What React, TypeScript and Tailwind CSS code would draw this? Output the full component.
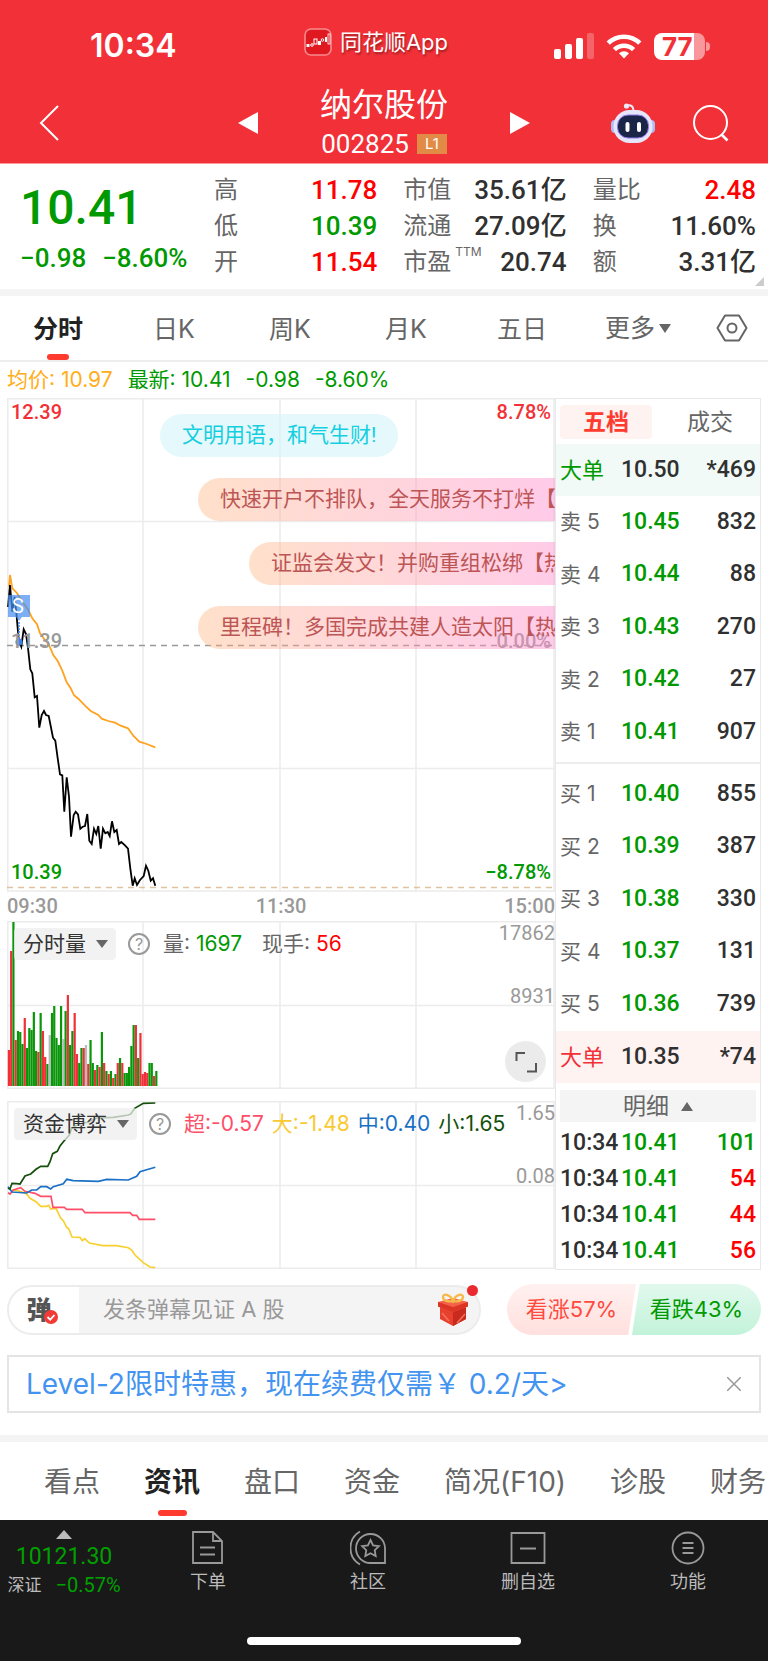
import { useState } from "react";

const PRICE_LINE =
  "1,209 3,187 5.3,213.7 7.7,199 9.7,218.7 11.7,242 14.3,248.7 16.7,231.3 19,236 21,250 23.3,271.3 25.3,275.3 27.7,299.3 30,298 32.3,329.7 34.7,317 37,313 39,317 41.7,318 43.7,328 46,339.7 48.3,342.7 50.7,360.3 53,376.3 55.3,377.3 57.3,413.7 59.7,379.3 62,398.7 64,438.7 66.7,417 68.7,413.7 71,416.3 73.3,430.7 75.7,428.7 78,428 80.3,416 82.3,442.7 84.7,446 87,430.7 89.3,436 91.3,428 93.7,450.7 96,430.7 98.3,435.3 100.7,434 102.7,438 105,423.3 107.3,434 109.7,432 112,446 114.3,444 118,447.3 121,450.7 123.3,470.3 125.7,487.7 127.7,480.3 130,487 133,482 136.7,478 139,467.7 141.3,472.7 143.7,482.7 146,480.3 148.3,487.7";
const AVG_LINE =
  "2,188.7 3,177 5.3,190.3 9.7,194.7 14.3,202 21.3,212 25.3,220.3 30,226.3 33,235.3 38,242 42,247 46.3,257 50.7,263 55.3,272.7 59.7,284.3 63.7,290.3 67,297.3 71.3,300.7 78,307.7 83.7,313 91.3,317 94.7,320.7 101.3,323 108,324.7 113.7,327.7 121,330.3 126.3,337.7 132.3,343.7 139.7,346 148.3,349.3";

const fundLines = [
  {
    color: "#f9d02f",
    points:
      "5,89 11.3,89.7 19.7,93 23,97.3 29,100.7 33.7,105.3 39.7,105.3 41.7,104.3 43.7,108 49,107.3 53.7,117 56.3,119.7 59.7,126.3 61.7,127.7 65,136 73,136.3 75.3,139.7 77.7,137.7 82.3,142 95.7,144.7 109.7,144.7 121.3,146.7 124.7,149 128,154 136.3,161.7 143,166 148.3,166.7",
  },
  {
    color: "#ff4f68",
    points:
      "1,91.7 3,93 6.3,89 13.7,86.7 18,90.3 28,92.3 33.7,95.3 44,95.3 46,106.3 57.3,106.3 59.7,108.3 75.3,108.3 78,111.7 123,111.7 125.7,114.3 129.7,114.3 132.3,118.3 148.3,118.3",
  },
  {
    color: "#1a70c4",
    points:
      "1,85.7 5,91 19.7,92 24.7,89 29.7,89 33.7,85.7 39.7,85.7 43.7,88 46.3,85.7 56.3,82.7 59.7,78.3 66.3,79.7 91.3,80.3 99.7,78.3 121.3,79 129.7,75.3 133,70.7 141.3,68.3 148.3,66.3",
  },
  {
    color: "#14500a",
    points:
      "1,87.3 3,88 5,82.3 9.7,82.7 13,83 18,75 23.7,73 29,68.3 33.7,65.3 40.7,65.3 43,60.7 45.7,52.7 50.3,50.3 53,45 57,40 62.3,34 64.7,27.3 71.3,23.3 80.3,21.3 89.7,17 106.3,16.3 121.3,14 123.7,13 127.7,7.3 136.3,2.3 148.3,2",
  },
];

// r = up, g = down, n = flat; number = bar height
const volumes =
  "r36 r135 g164 r46 g55 g54 g42 r68 g38 g58 g56 g74 g35 r34 g73 r55 r29 g22 n51 g73 g80 g48 g41 g80 n47 g75 r91 g41 g55 r73 r32 g23 g38 r38 n41 r22 g46 g23 r16 g21 r19 g54 r23 g15 r12 g15 r8 g12 r23 g28 r23 g13 g13 g19 g40 g61 r61 g28 r53 r12 r14 r13 g23 g23 r10 g15".split(" ");
const barColors: Record<string, string> = { r: "#ef3038", g: "#0a960a", n: "#bbbbbb" };

const stats = [
  [
    { label: "高", value: "11.78", color: "text-[#ff0000]" },
    { label: "低", value: "10.39", color: "text-[#009900]" },
    { label: "开", value: "11.54", color: "text-[#ff0000]" },
  ],
  [
    { label: "市值", value: "35.61亿", color: "text-[#303030]" },
    { label: "流通", value: "27.09亿", color: "text-[#303030]" },
    { label: "市盈", sup: "TTM", value: "20.74", color: "text-[#303030]" },
  ],
  [
    { label: "量比", value: "2.48", color: "text-[#ff0000]" },
    { label: "换", value: "11.60%", color: "text-[#303030]" },
    { label: "额", value: "3.31亿", color: "text-[#303030]" },
  ],
];

const sells = [
  ["卖 5", "10.45", "832"],
  ["卖 4", "10.44", "88"],
  ["卖 3", "10.43", "270"],
  ["卖 2", "10.42", "27"],
  ["卖 1", "10.41", "907"],
];
const buys = [
  ["买 1", "10.40", "855"],
  ["买 2", "10.39", "387"],
  ["买 3", "10.38", "330"],
  ["买 4", "10.37", "131"],
  ["买 5", "10.36", "739"],
];
const ticks = [
  ["10:34", "101", "text-[#009900]"],
  ["10:34", "54", "text-[#ff0000]"],
  ["10:34", "44", "text-[#ff0000]"],
  ["10:34", "56", "text-[#ff0000]"],
];

const num = "font-['Roboto','Noto_Sans_CJK_SC',sans-serif]";

function StatusBar() {
  return (
    <div className="grid grid-cols-3 items-center px-[58px] pt-6">
      <span className="pl-8 text-[32px] leading-[44px] font-semibold">10:34</span>
      <div className="flex items-center justify-center gap-2 pr-4 pb-2">
        <svg viewBox="0 0 28 28" className="size-7 shrink-0" aria-hidden="true">
          <rect x="1" y="1" width="26" height="26" rx="6" fill="#e01820" stroke="#f98a8e" strokeWidth="1.6" />
          <g fill="#fff">
            <rect x="2.5" y="16" width="3" height="3" />
            <rect x="10" y="11" width="3" height="5" fill="none" stroke="#fff" />
            <rect x="14" y="13" width="3" height="4" />
            <rect x="21" y="9" width="2" height="5" />
          </g>
          <circle cx="8" cy="17" r="1.3" fill="none" stroke="#fff" />
          <circle cx="18.5" cy="12" r="1.3" fill="none" stroke="#fff" />
          <rect x="24" y="6" width="2" height="10" fill="none" stroke="#fff" strokeWidth=".8" />
        </svg>
        <span className="text-[22px] leading-8 whitespace-nowrap [text-shadow:1px_2px_2px_rgba(0,0,0,0.35)]">同花顺App</span>
      </div>
      <div className="flex items-center justify-end gap-3">
        <svg width="40" height="26" viewBox="0 0 40 26" fill="#fff" aria-hidden="true">
          <rect x="0" y="16" width="7" height="10" rx="2" />
          <rect x="11" y="11" width="7" height="15" rx="2" />
          <rect x="22" y="5" width="7" height="21" rx="2" />
          <rect x="33" y="0" width="7" height="26" rx="2" opacity=".25" />
        </svg>
        <svg width="36" height="26" viewBox="0 0 36 26" fill="none" stroke="#fff" strokeWidth="4.6" aria-hidden="true">
          <path d="M2.2 10.2a22.5 22.5 0 0 1 31.6 0" />
          <path d="M8.4 16.6a13.8 13.8 0 0 1 19.2 0" />
          <path d="M18 25.5l-5-5.2a7.4 7.4 0 0 1 10 0z" fill="#fff" stroke="none" />
        </svg>
        <div className="flex items-center gap-px">
          <div className="h-[27px] w-[51px] rounded-lg bg-linear-to-r from-white from-78% to-white/50 to-78% pl-2 text-[26px] leading-[28px] font-bold text-[#f23037]">
            77
          </div>
          <div className="h-[9px] w-[4px] rounded-r-full bg-white/50" />
        </div>
      </div>
    </div>
  );
}

function Robot() {
  return (
    <svg width="46" height="42" viewBox="0 0 46 42" aria-hidden="true">
      <path d="M17 3.5c4-1 6.500 1 6.500 5" fill="none" stroke="#eceaf8" strokeWidth="2" />
      <circle cx="16.500" cy="4" r="2.600" fill="#eceaf8" />
      <rect x="1" y="18" width="8" height="13" rx="4" fill="#aebbf5" />
      <rect x="37" y="18" width="8" height="13" rx="4" fill="#aebbf5" />
      <rect x="3.500" y="8" width="39" height="33" rx="16" fill="#e6e6fa" />
      <rect x="7.500" y="13" width="31" height="23" rx="10.500" fill="#1b2547" stroke="#8f7bf0" strokeWidth="1" />
      <rect x="15.500" y="20" width="4" height="10" rx="2" fill="#fff" />
      <rect x="27" y="20" width="4" height="10" rx="2" fill="#fff" />
    </svg>
  );
}

function TitleBar() {
  return (
    <div className="grid grid-cols-[1fr_auto_1fr] items-center px-[38px]">
      <button type="button" aria-label="返回" className="justify-self-start">
        <svg width="22" height="36" viewBox="0 0 22 36" fill="none" stroke="#fff" strokeWidth="2">
          <path d="M20 1L3 18l17 17" />
        </svg>
      </button>
      <div className="flex items-center gap-[62px]">
        <button type="button" aria-label="上一只">
          <svg width="20" height="22" viewBox="0 0 20 22" fill="#fff"><path d="M20 0v22L0 11z" /></svg>
        </button>
        <div className="flex flex-col items-center gap-[3px]">
          <h1 className="text-[32px] leading-10">纳尔股份</h1>
          <div className="flex items-center gap-2">
            <span className={`${num} text-[26px] leading-8`}>002825</span>
            <span className="bg-[#e18b46] px-2 text-[15px] leading-5">L1</span>
          </div>
        </div>
        <button type="button" aria-label="下一只">
          <svg width="20" height="22" viewBox="0 0 20 22" fill="#fff"><path d="M0 0v22l20-11z" /></svg>
        </button>
      </div>
      <div className="flex items-center justify-end gap-9">
        <button type="button" aria-label="智能助手"><Robot /></button>
        <button type="button" aria-label="搜索">
          <svg width="38" height="38" viewBox="0 0 38 38" fill="none" stroke="#fff" strokeWidth="2">
            <circle cx="18.500" cy="18.500" r="16.500" />
            <path d="M29.500 30.500l6 6" strokeWidth="2.600" />
          </svg>
        </button>
      </div>
    </div>
  );
}

function Quote() {
  return (
    <section className="relative flex h-[126px] border-t border-[#f99] pr-3">
      <div className={`${num} w-[214px] shrink-0 pl-5 font-medium text-[#009900]`}>
        <div className="pt-3 text-[48px] leading-[64px]">10.41</div>
        <div className="flex gap-4 text-[26px] leading-9">
          <span>−0.98</span>
          <span>−8.60%</span>
        </div>
      </div>
      <div className="grid flex-1 grid-cols-3 gap-[26px] pt-2">
        {stats.map((col, i) => (
          <dl key={i}>
            {col.map(s => (
              <div key={s.label} className="flex h-9 items-center justify-between">
                <dt className="flex text-2xl leading-9 whitespace-nowrap text-[#666]">
                  {s.label}
                  {s.sup && <sup className="top-0 pl-1 text-xs leading-4">{s.sup}</sup>}
                </dt>
                <dd className={`${num} text-[26px] leading-9 font-medium whitespace-nowrap ${s.color}`}>{s.value}</dd>
              </div>
            ))}
          </dl>
        ))}
      </div>
      <svg className="absolute right-1 bottom-[3px]" width="9" height="9" viewBox="0 0 9 9" fill="#ccc" aria-hidden="true">
        <path d="M9 0v9H0z" />
      </svg>
    </section>
  );
}

function PeriodTabs() {
  const [active, setActive] = useState("分时");
  return (
    <nav className="flex h-[66px] items-stretch border-b-2 border-[#eee]">
      {["分时", "日K", "周K", "月K", "五日"].map(t => (
        <button
          key={t}
          type="button"
          onClick={() => setActive(t)}
          className={`flex flex-1 flex-col items-center justify-end gap-1 text-[25px] leading-9 ${
            active === t ? "font-bold text-[#222]" : "text-[#666]"
          }`}
        >
          <span className="pb-[3px]">{t}</span>
          <span className={`h-[6px] w-[22px] rounded-[3px] ${active === t ? "bg-[#ff3b30]" : ""}`} />
        </button>
      ))}
      <button type="button" className="flex flex-1 items-center justify-center gap-1 text-[25px] leading-9 text-[#666]">
        更多
        <svg width="12" height="9" viewBox="0 0 12 9" fill="#666"><path d="M0 0h12L6 9z" /></svg>
      </button>
      <button type="button" aria-label="设置" className="flex w-[72px] items-center justify-center">
        <svg width="32" height="28" viewBox="0 0 32 28" fill="none" stroke="#666" strokeWidth="2">
          <path d="M9 1.500h14L30.500 14 23 26.500H9L1.500 14z" strokeLinejoin="round" />
          <circle cx="16" cy="14" r="4.500" />
        </svg>
      </button>
    </nav>
  );
}

function PriceChart() {
  const pill = "w-max rounded-full px-[22px] leading-[43px] text-[21px] whitespace-nowrap";
  const hot = "bg-linear-to-r from-[#ffb27a]/40 to-[#ff8ccb]/45 to-90% text-[#bd5555]";
  return (
    <div className={`relative h-[494px] ${num} text-xl leading-6 font-medium`}>
      <svg viewBox="0 0 548 494" preserveAspectRatio="none" className="absolute inset-0 size-full" fill="none">
        <g stroke="#ececec" strokeWidth="1.500">
          <path d="M0 .8h548M0 123.500h548M0 370.500h548M0 493h548M.8 0v494M136 0v494M273 0v494M409 0v494M547 0v494" />
        </g>
        <path d="M0 247.500h548" stroke="#999" strokeWidth="1.500" strokeDasharray="6 5" />
        <path d="M0 489.500h548" stroke="#dfc3a0" strokeWidth="1.300" strokeDasharray="6 5" />
        <polyline points={AVG_LINE} stroke="#ffa21f" strokeWidth="1.800" />
        <polyline points={PRICE_LINE} stroke="#000" strokeWidth="1.800" />
        <path d="M12 224v18" stroke="#3b8bef" strokeWidth="1.500" strokeDasharray="2 1" />
        <path d="M1 197h22v22h-8l-3 4-3-4H1z" fill="#4a90ee" opacity=".72" />
        <circle cx="12" cy="244" r="3.500" fill="#3b82e6" />
      </svg>
      <span className="absolute top-[196px] left-[5px] text-xl leading-6 font-normal text-white">S</span>
      <span className="absolute top-[2px] left-1 text-[#f23037]">12.39</span>
      <span className="absolute top-[2px] right-1 text-[#f23037]">8.78%</span>
      <span className="absolute top-[231px] left-1 text-[#999]">11.39</span>
      <span className="absolute top-[231px] right-1 text-[#999]">0.00%</span>
      <span className="absolute bottom-2 left-1 text-[#009900]">10.39</span>
      <span className="absolute right-1 bottom-2 text-[#009900]">−8.78%</span>
      {/* 弹幕 */}
      <div className="absolute inset-x-0 top-4 flex flex-col gap-[21px] overflow-hidden font-normal">
        <div className={`${pill} ml-[153px] bg-[#d4f4f9]/60 text-[#14cfe0]`}>文明用语，和气生财!</div>
        <div className={`${pill} ${hot} ml-[191px]`}>快速开户不排队，全天服务不打烊【</div>
        <div className={`${pill} ${hot} ml-[242px]`}>证监会发文！并购重组松绑【热</div>
        <div className={`${pill} ${hot} ml-[191px]`}>里程碑！多国完成共建人造太阳【热</div>
      </div>
    </div>
  );
}

function SubGrid() {
  return (
    <path
      d="M0 .8h548M0 84.500h548M0 167.200h548M.8 0v168M136 0v168M273 0v168M409 0v168M547 0v168"
      stroke="#ececec"
      strokeWidth="1.500"
      fill="none"
    />
  );
}

function IndicatorSelect({ name }: { name: string }) {
  return (
    <div className="relative flex items-center">
      <select
        aria-label="指标"
        className="h-8 appearance-none rounded bg-[#ededed]/75 pr-[30px] pl-[9px] text-[21px] leading-8 text-[#333]"
      >
        <option>{name}</option>
      </select>
      <svg className="pointer-events-none absolute right-2" width="12" height="8" viewBox="0 0 12 8" fill="#666">
        <path d="M0 0h12L6 8z" />
      </svg>
    </div>
  );
}

function Help() {
  return (
    <button
      type="button"
      aria-label="说明"
      className="mr-[13px] ml-3 size-[22px] rounded-full border-2 border-[#999] text-center text-base leading-[18px] text-[#999]"
    >
      ?
    </button>
  );
}

function VolumeChart() {
  return (
    <div className="relative h-[168px] text-[21px] leading-8">
      <svg viewBox="0 0 548 168" preserveAspectRatio="none" className="absolute inset-0 size-full">
        <SubGrid />
        {volumes.map((v, i) => {
          const h = Number(v.slice(1));
          return <rect key={i} x={0.8 + i * 2.268} y={165 - h} width="2.2" height={h} fill={barColors[v[0]]} />;
        })}
      </svg>
      <div className="relative flex items-center pt-[7px] pl-[7px]">
        <IndicatorSelect name="分时量" />
        <Help />
        <span className="text-[#666]">量: <span className="text-[#009900]">1697</span></span>
        <span className="pl-5 text-[#666]">现手: <span className="text-[#ff0000]">56</span></span>
      </div>
      <span className={`${num} absolute top-0 right-0 text-xl leading-6 text-[#999]`}>17862</span>
      <span className={`${num} absolute top-[63px] right-0 text-xl leading-6 text-[#999]`}>8931</span>
      <button
        type="button"
        aria-label="全屏"
        className="absolute right-[9px] bottom-[7px] flex size-[41px] items-center justify-center rounded-full bg-[#ebebeb]"
      >
        <svg width="22" height="22" viewBox="0 0 22 22" fill="none" stroke="#555" strokeWidth="2">
          <path d="M10 2H1.500v8M21 12v8.500h-9" />
        </svg>
      </button>
    </div>
  );
}

function FundChart() {
  return (
    <div className="relative h-[168px] text-[21px] leading-8">
      <svg viewBox="0 0 548 168" preserveAspectRatio="none" className="absolute inset-0 size-full">
        <SubGrid />
        {fundLines.map(l => (
          <polyline key={l.color} points={l.points} fill="none" stroke={l.color} strokeWidth="1.700" />
        ))}
      </svg>
      <div className="relative flex items-center pt-[7px] pl-[7px]">
        <IndicatorSelect name="资金博弈" />
        <Help />
        <div className="flex gap-2 whitespace-nowrap">
          <span className="text-[#ff4f68]">超:-0.57</span>
          <span className="text-[#f9c92f]">大:-1.48</span>
          <span className="text-[#1a70c4]">中:0.40</span>
          <span className="text-[#14500a]">小:1.65</span>
        </div>
      </div>
      <span className={`${num} absolute top-0 right-0 text-xl leading-6 text-[#999]`}>1.65</span>
      <span className={`${num} absolute top-[63px] right-0 text-xl leading-6 text-[#999]`}>0.08</span>
    </div>
  );
}

function Levels({ rows }: { rows: string[][] }) {
  return (
    <table className="h-[262px] w-full table-fixed">
      <tbody>
        {rows.map(([label, price, vol]) => (
          <tr key={label}>
            <th className="w-[65px] pl-1 text-left text-[21px] font-normal text-[#666]">{label}</th>
            <td className={`${num} text-[23px] font-medium text-[#009900]`}>{price}</td>
            <td className={`${num} pr-1 text-right text-[23px] font-medium text-[#303030]`}>{vol}</td>
          </tr>
        ))}
      </tbody>
    </table>
  );
}

function BigOrder({ price, vol, tone }: { price: string; vol: string; tone: string }) {
  return (
    <div className={`flex h-[52px] items-center pr-1 pl-1 ${tone}`}>
      <span className="w-[61px] text-[22px]">大单</span>
      <span className={`${num} flex-1 text-[23px] font-medium text-[#303030]`}>{price}</span>
      <span className={`${num} text-[23px] font-medium text-[#303030]`}>{vol}</span>
    </div>
  );
}

function OrderBook() {
  return (
    <aside className="w-[206px] shrink-0 border border-[#e8e8e8]">
      <div className="flex h-[45px] items-center px-1 text-[23px]">
        <button type="button" className="h-[34px] flex-1 rounded bg-[#fff3f2] font-bold text-[#ff3b30]">五档</button>
        <button type="button" className="h-[34px] flex-1 pl-3 text-[#666]">成交</button>
      </div>
      <BigOrder price="10.50" vol="*469" tone="bg-[#f1faf6] text-[#009900]" />
      <Levels rows={sells} />
      <div className="my-1 h-[2px] bg-[#ececec]" />
      <Levels rows={buys} />
      <div className="pt-px">
        <BigOrder price="10.35" vol="*74" tone="bg-[#fff3f2] text-[#f23037]" />
      </div>
      <div className="px-1 pt-[7px] pb-[3px]">
        <button type="button" className="flex h-8 w-full items-center justify-center gap-3 bg-[#f4f4f4] text-[23px] leading-8 text-[#666]">
          明细
          <svg width="12" height="9" viewBox="0 0 12 9" fill="#666"><path d="M0 9h12L6 0z" /></svg>
        </button>
      </div>
      <table className={`${num} w-full table-fixed text-[23px] leading-9 font-medium`}>
        <tbody>
          {ticks.map(([time, vol, color]) => (
            <tr key={vol}>
              <td className="w-[65px] pl-1 text-[#303030]">{time}</td>
              <td className="text-[#009900]">10.41</td>
              <td className={`pr-1 text-right ${color}`}>{vol}</td>
            </tr>
          ))}
        </tbody>
      </table>
    </aside>
  );
}

function Gift() {
  return (
    <svg width="32" height="34" viewBox="0 0 32 34" aria-hidden="true">
      <path d="M3 13l13 5 13-5v13l-13 7-13-7z" fill="#e8402f" />
      <path d="M16 18l13-5v13l-13 7z" fill="#c92a1e" />
      <path d="M1 9l15-4 15 4v4.500L16 19 1 13.500z" fill="#f4604a" />
      <path d="M1 9l15 5 15-5v4.500L16 19 1 13.500z" fill="#db3526" />
      <path d="M16 8c-3-7-10-8-10-4s6 5 10 4c4 1 10 0 10-4s-7-3-10 4z" fill="none" stroke="#f6b94a" strokeWidth="2.400" />
      <path d="M20 30l8-9M5 20l7 8" stroke="#f2715c" strokeWidth="1.500" />
    </svg>
  );
}

function DanmakuBar() {
  return (
    <div className="flex items-center gap-[26px] px-[7px] pt-[14px]">
      <div className="relative flex h-[50px] min-w-0 flex-1 items-center rounded-full border-2 border-[#ececec] bg-[#f4f4f4]">
        <button
          type="button"
          aria-label="弹幕开关"
          className="relative h-full w-[70px] shrink-0 rounded-l-full bg-white pr-[10px] text-[25px] leading-[40px] font-black text-[#555]"
        >
          弹
          <svg className="absolute top-[23px] left-[35px]" width="14" height="14" viewBox="0 0 14 14">
            <circle cx="7" cy="7" r="7" fill="#f23b35" />
            <path d="M3.500 7l2.700 2.700L10.500 5" fill="none" stroke="#fff" strokeWidth="1.800" />
          </svg>
        </button>
        <input
          aria-label="弹幕"
          placeholder="发条弹幕见证 A 股"
          className="min-w-0 flex-1 bg-transparent pl-6 text-[22px] text-[#333] outline-none placeholder:text-[#999]"
        />
        <button type="button" aria-label="礼物" className="mr-[10px] shrink-0"><Gift /></button>
        <span className="absolute -top-[2px] right-[1px] size-[11px] rounded-full bg-[#ea2a2f]" />
      </div>
      <div className="flex w-[254px] shrink-0 text-[22px] leading-[51px] whitespace-nowrap">
        <button
          type="button"
          className="flex-1 rounded-l-full bg-linear-to-b from-[#fff1f0] to-[#ffe0de] text-[#ff4a3d] [clip-path:polygon(0_0,100%_0,94%_100%,0_100%)]"
        >
          看涨57%
        </button>
        <button
          type="button"
          className="-ml-1 flex-1 rounded-r-full bg-linear-to-b from-[#e2f9ee] to-[#c2f2d9] text-[#009900] [clip-path:polygon(6%_0,100%_0,100%_100%,0_100%)]"
        >
          看跌43%
        </button>
      </div>
    </div>
  );
}

function InfoTabs() {
  const [active, setActive] = useState("资讯");
  return (
    <nav className="flex h-[78px] gap-11 overflow-hidden pl-11">
      {["看点", "资讯", "盘口", "资金", "简况(F10)", "诊股", "财务"].map(t => (
        <button
          key={t}
          type="button"
          onClick={() => setActive(t)}
          className={`flex shrink-0 flex-col items-center justify-between pt-5 pb-1 text-[28px] leading-10 whitespace-nowrap ${
            active === t ? "font-bold text-[#222]" : "text-[#666]"
          }`}
        >
          {t}
          <span className={`h-[6px] w-[29px] rounded-[3px] ${active === t ? "bg-[#ff3b30]" : ""}`} />
        </button>
      ))}
    </nav>
  );
}

const navItems = [
  { label: "下单", icon: <path d="M3 2h20l9 9v22H3zM23 2v9h9M10 17.500h15M10 24.500h15" /> },
  {
    label: "社区",
    icon: (
      <>
        <path d="M35 33H21A14.500 14.500 0 1 1 35 18.500zM10 34.500A19 19 0 0 1 10 1.500" />
        <path d="M20.500 10l2.600 5.300 5.800.8-4.200 4.100 1 5.800-5.200-2.700-5.200 2.700 1-5.800-4.200-4.100 5.800-.8z" />
      </>
    ),
  },
  { label: "删自选", icon: <path d="M1.500 3h33v30h-33zM10 18.500h16" /> },
  {
    label: "功能",
    icon: (
      <>
        <circle cx="18" cy="18" r="15.500" />
        <path d="M12.500 13h11M12.500 18h11M12.500 23h11" />
      </>
    ),
  },
];

function BottomNav() {
  return (
    <footer className="bg-[#191919] text-[#bbb]">
      <div className="flex h-[117px] pt-[10px]">
        <button type="button" className={`${num} flex w-32 flex-col items-center text-[#00a000]`}>
          <svg width="16" height="9" viewBox="0 0 16 9" fill="#bbb"><path d="M0 9h16L8 0z" /></svg>
          <span className="text-[23px] leading-9">10121.30</span>
          <span className="flex items-center gap-[14px] text-xl leading-5">
            <span className="text-[17px] text-[#bbb]">深证</span>−0.57%
          </span>
        </button>
        {navItems.map(n => (
          <button key={n.label} type="button" className="flex flex-1 flex-col items-center gap-1 text-lg leading-6">
            <svg width="36" height="36" viewBox="0 0 36 36" fill="none" stroke="#999" strokeWidth="1.800">{n.icon}</svg>
            {n.label}
          </button>
        ))}
      </div>
      <div className="flex justify-center pb-4">
        <div className="h-2 w-[274px] rounded-full bg-white" />
      </div>
    </footer>
  );
}

export default function App() {
  return (
    <div className="w-full overflow-hidden bg-white font-['Inter','Noto_Sans_CJK_SC',sans-serif]">
      <header className="h-[163px] bg-[#f23037] text-white">
        <StatusBar />
        <div className="pt-[17px]">
          <TitleBar />
        </div>
      </header>
      <Quote />
      <div className="h-[7px] bg-[#f4f4f4]" />
      <PeriodTabs />
      <div className="flex h-9 items-center gap-[15px] px-[7px] text-[21px] whitespace-nowrap text-[#009900]">
        <span className="text-[#ffae19]">均价: 10.97</span>
        <span>最新: 10.41</span>
        <span>-0.98</span>
        <span>-8.60%</span>
      </div>
      <main className="flex px-[7px]">
        <div className="min-w-0 flex-1">
          <PriceChart />
          <div className={`${num} flex h-[29px] justify-between text-xl leading-7 font-medium text-[#999]`}>
            <span>09:30</span>
            <span>11:30</span>
            <span>15:00</span>
          </div>
          <VolumeChart />
          <div className="pt-3">
            <FundChart />
          </div>
        </div>
        <OrderBook />
      </main>
      <DanmakuBar />
      <div className="px-[7px] pt-5 pb-[22px]">
        <div className="flex h-[58px] items-center justify-between border-2 border-[#e4e4e4] pr-[18px] pl-[17px] text-[28px] whitespace-nowrap text-[#4393f0]">
          <a href="#level2">Level-2限时特惠，现在续费仅需￥ 0.2/天&gt;</a>
          <button type="button" aria-label="关闭">
            <svg width="14" height="14" viewBox="0 0 14 14" stroke="#999" strokeWidth="1.500"><path d="M0 0l14 14M14 0L0 14" /></svg>
          </button>
        </div>
      </div>
      <div className="h-[7px] bg-[#f4f4f4]" />
      <InfoTabs />
      <BottomNav />
    </div>
  );
}
